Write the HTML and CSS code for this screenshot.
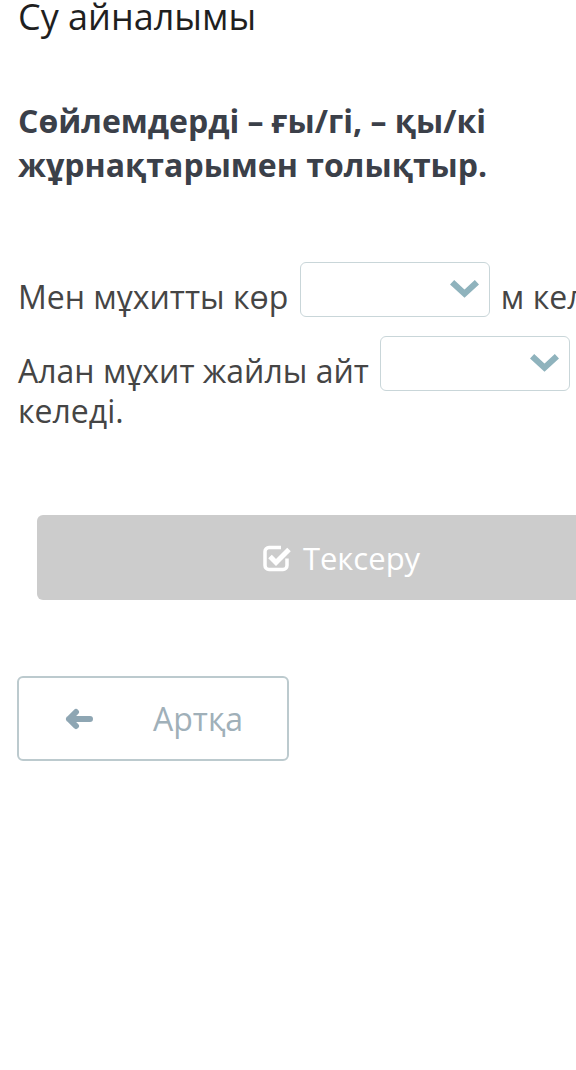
FILE: index.html
```html
<!DOCTYPE html>
<html lang="kk">
<head>
  <meta charset="UTF-8">
  <meta name="viewport" content="width=device-width, initial-scale=1.0">
  <title>Су айналымы</title>
  <link rel="stylesheet" href="styles.css">
</head>
<body>
  <div class="page">
    <h1 class="title">Су айналымы</h1>
    <h2 class="task">Сөйлемдерді – ғы/гі, – қы/кі жұрнақтарымен толықтыр.</h2>

    <p class="sentence">
      Мен мұхитты көр
      <span class="dropdown">
        <svg class="chevron" viewBox="0 0 30 18" aria-hidden="true"><path d="M3 3 L15 14 L27 3"/></svg>
      </span>
      м келеді.
      <br>
      Алан мұхит жайлы айт
      <span class="dropdown">
        <svg class="chevron" viewBox="0 0 30 18" aria-hidden="true"><path d="M3 3 L15 14 L27 3"/></svg>
      </span>
      келеді.
    </p>

    <button class="check" type="button" disabled>
      <svg class="check-icon" viewBox="0 0 30 28" aria-hidden="true">
        <path class="box" d="M19 3.5 H7 a4 4 0 0 0 -4 4 v14 a4 4 0 0 0 4 4 h14 a4 4 0 0 0 4 -4 v-7"/>
        <path class="tick" d="M8 12.5 L14 18.5 L27 5.5"/>
      </svg>
      Тексеру
    </button>

    <button class="back" type="button">
      <svg class="arrow" viewBox="0 0 30 22" aria-hidden="true"><path d="M12 4 L5 11 L12 18 M5 11 H26"/></svg>
      <span>Артқа</span>
    </button>
  </div>
</body>
</html>
```

FILE: styles.css
```css
html, body {
  overflow: hidden;
}
body {
  margin: 0;
  background: #fff;
  font-family: 'Open Sans', sans-serif;
  color: #454545;
}
.page {
  width: 650px;
  padding: 0 18px;
}
.title {
  margin: -5px 0 0;
  font-size: 36px;
  font-weight: 400;
  line-height: 1.2;
  color: #1f1f1f;
}
.task {
  margin: 61px 0 0;
  font-size: 32px;
  font-weight: 700;
  line-height: 44px;
  color: #3b4049;
}
.sentence {
  margin: 56px 0 0;
  font-size: 32px;
  line-height: 40px;
}
.dropdown {
  display: inline-block;
  overflow: hidden;
  box-sizing: border-box;
  width: 190px;
  height: 55px;
  margin: 19px 3px 0;
  vertical-align: -8px;
  border: 1.5px solid #c9d6d9;
  border-radius: 6px;
}
.chevron {
  display: block;
  width: 31px;
  height: 19px;
  margin: 16px 9px 0 auto;
  fill: none;
  stroke: #8fb3bd;
  stroke-width: 6;
}
.check {
  display: flex;
  align-items: center;
  justify-content: center;
  gap: 11px;
  width: 608px;
  height: 85px;
  margin: 84px 0 0 19px;
  border: none;
  border-radius: 6px;
  background: #cccccc;
  color: #fff;
  font-family: 'Open Sans', sans-serif;
  font-size: 31px;
}
.check-icon {
  width: 30px;
  height: 28px;
  fill: none;
  stroke: #fff;
}
.check-icon .box {
  stroke-width: 3.5;
}
.check-icon .tick {
  stroke-width: 5;
}
.back {
  display: flex;
  align-items: center;
  gap: 59px;
  box-sizing: border-box;
  width: 272px;
  height: 85px;
  margin: 76px 0 0 -1px;
  padding: 0 0 0 45px;
  border: 2px solid #bccace;
  border-radius: 6px;
  background: #fff;
  color: #a0b0b9;
  font-family: 'Open Sans', sans-serif;
  font-size: 32px;
}
.arrow {
  width: 30px;
  height: 22px;
  fill: none;
  stroke: #8ea6b3;
  stroke-width: 6;
  stroke-linecap: round;
  stroke-linejoin: round;
}
```
